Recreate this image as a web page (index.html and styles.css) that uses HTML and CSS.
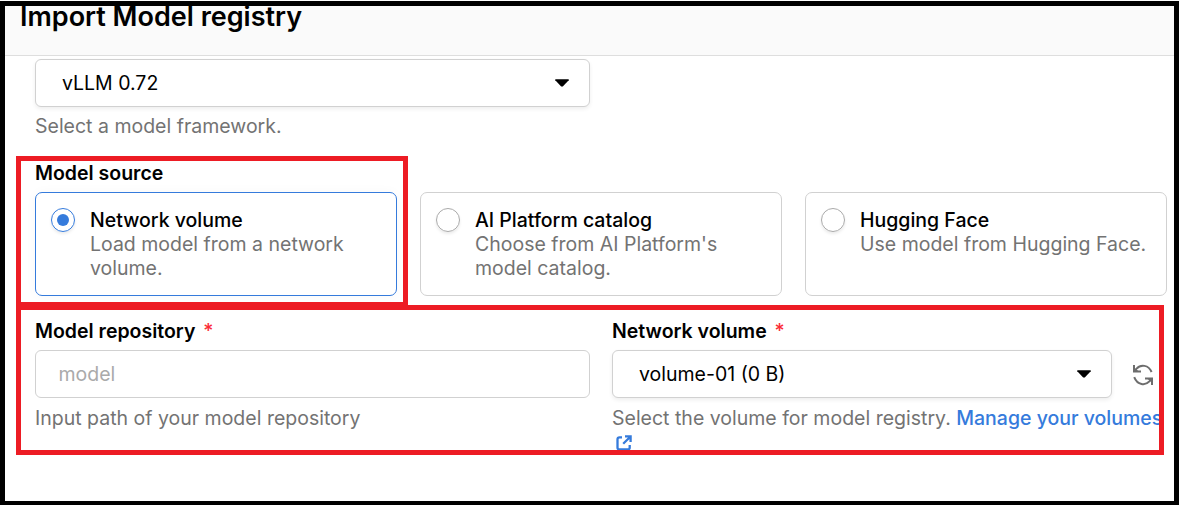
FILE: index.html
```
<!DOCTYPE html>
<html lang="en">
<head>
<meta charset="utf-8">
<title>Import Model registry</title>
<link rel="stylesheet" href="styles.css">
</head>
<body>
<div class="frame">
  <header class="header"><h1 class="title">Import Model registry</h1></header>
  <main class="form">
    <section class="field framework">
      <div class="control select"><span class="value">vLLM 0.72</span><svg class="caret" viewBox="0 0 14 8"><path d="M.3.3h13.4v1L7.8 7.4H6.2L.3 1.3z"/></svg></div>
      <p class="help">Select a model framework.</p>
    </section>
    <section class="source">
      <h2 class="label">Model source</h2>
      <div class="cards">
        <div class="card selected"><span class="radio"></span><div class="card-text"><h3 class="card-title">Network volume</h3><p class="card-desc">Load model from a network<br>volume.</p></div></div>
        <div class="card"><span class="radio"></span><div class="card-text"><h3 class="card-title">AI Platform catalog</h3><p class="card-desc">Choose from AI Platform's<br>model catalog.</p></div></div>
        <div class="card"><span class="radio"></span><div class="card-text"><h3 class="card-title">Hugging Face</h3><p class="card-desc">Use model from Hugging Face.</p></div></div>
      </div>
    </section>
    <section class="fields">
      <div class="field">
        <h2 class="label">Model repository <span class="required">*</span></h2>
        <div class="control input"><span class="placeholder">model</span></div>
        <p class="help">Input path of your model repository</p>
      </div>
      <div class="field">
        <h2 class="label">Network volume <span class="required">*</span></h2>
        <div class="control-row">
          <div class="control select"><span class="value">volume-01 (0 B)</span><svg class="caret" viewBox="0 0 14 8"><path d="M.3.3h13.4v1L7.8 7.4H6.2L.3 1.3z"/></svg></div>
          <svg class="refresh" viewBox="0 0 22 22"><path d="M2 1V7.4H9M2.2 7.2L4.6 4.6C8.6 .2 16.6 .6 19.6 8M20 21V14.6H13M19.8 14.8L17.4 17.4C13.4 21.8 5.4 21.4 2.2 13.2"/><path class="refresh-head" d="M2 3.5V7.4H7zM20 18.5V14.6H15z"/></svg>
        </div>
        <p class="help">Select the volume for model registry. <a class="link">Manage your volumes<br><svg class="external" viewBox="0 0 16 16"><path d="M6 2.3H3.5Q1.5 2.3 1.5 4.3V12.5Q1.5 14.5 3.5 14.5H11.7Q13.7 14.5 13.7 12.5V10M9 1.4H14.6V7M14.3 1.7L7.2 8.8"/></svg></a></p>
      </div>
    </section>
  </main>
  <div class="highlight highlight-source"></div>
  <div class="highlight highlight-fields"></div>
</div>
</body>
</html>
```
FILE: styles.css
```
* { box-sizing: border-box; margin: 0; }
body {
  padding-top: 1px;
  background: #fff;
  color: #000;
  font: 400 19.5px/24px Inter, sans-serif;
  overflow: hidden;
}
.frame {
  position: relative;
  width: 1179px;
  height: 504px;
  border: 5px solid #000;
  border-bottom-width: 4px;
  overflow: hidden;
}
.header { display: flow-root; height: 50px; padding-left: 15px; background: #fafafa; border-bottom: 1px solid #dedede; }
.title { margin-top: -6px; font-size: 27px; line-height: 34px; font-weight: 600; white-space: nowrap; }
.form { padding: 3px 0 0 30px; }
.framework { width: 555px; }
.control {
  display: flex;
  align-items: center;
  height: 48px;
  border: 1px solid #d1d1d1;
  border-radius: 6px;
  background: #fff;
}
.select { justify-content: space-between; padding: 0 20px 0 26px; box-shadow: 0 2px 4px rgba(0,0,0,.07); }
.input { padding-left: 22.5px; }
.placeholder { color: #aaa; }
.caret { width: 14px; height: 8px; }
.help { margin-top: 8px; color: #737373; white-space: nowrap; }
.framework .help { margin-top: 7px; }
.source { margin-top: 23px; }
.label { font-size: 19.5px; line-height: 24px; font-weight: 600; white-space: nowrap; }
.required { margin-left: 3px; color: #fb2c36; font-weight: 500; }
.cards { display: grid; grid-template-columns: repeat(3, 362px); gap: 23px; margin-top: 7px; }
.card { display: flex; gap: 15px; height: 104px; padding: 15px; border: 1px solid #d1d1d1; border-radius: 7px; background: #fff; }
.card.selected { border-color: #357bdc; box-shadow: 0 0 12px rgba(0,0,0,.03); }
.radio { flex: none; display: grid; place-items: center; width: 24px; height: 24px; border: 1px solid #aaa; border-radius: 50%; box-shadow: 0 2px 3px rgba(0,0,0,.08); }
.selected .radio { border-color: #357bdc; }
.selected .radio::after { content: ""; width: 12px; height: 12px; border-radius: 50%; background: #357bdc; }
.card-title { font-size: 19.5px; line-height: 24px; font-weight: 500; white-space: nowrap; }
.card-desc { color: #737373; white-space: nowrap; }
.fields { display: grid; grid-template-columns: 555px 552px; gap: 22px; margin-top: 23px; }
.fields .control { margin-top: 7px; }
.control-row { display: flex; gap: 20px; }
.control-row .select { width: 500px; }
.refresh { width: 22px; height: 22px; margin-top: 21px; fill: none; stroke: #6d6d6d; stroke-width: 2; }
.refresh-head { fill: #6d6d6d; stroke: none; }
.link { color: #357bdc; font-weight: 500; }
.external { display: inline-block; width: 16px; height: 16px; margin-left: 4px; vertical-align: -2px; fill: none; stroke: #357bdc; stroke-width: 2.3; }
.highlight { position: absolute; border: 5px solid #ed1c24; pointer-events: none; }
.highlight-source { left: 11px; top: 150px; width: 392px; height: 151px; }
.highlight-fields { left: 11px; top: 299px; width: 1148px; height: 150px; }
```
